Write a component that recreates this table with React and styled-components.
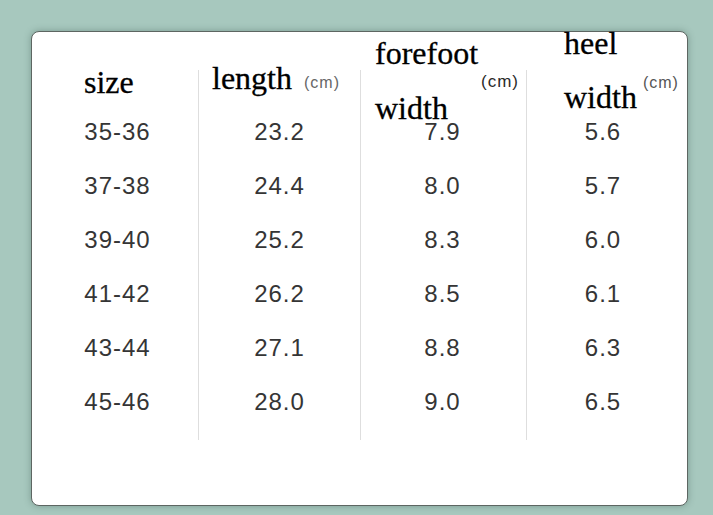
import React from "react";
import styled, { createGlobalStyle } from "styled-components";

const GlobalStyle = createGlobalStyle`
  html, body {
    margin: 0;
    padding: 0;
    background: #a7c8be;
  }
  body {
    font-family: "Liberation Sans", Arial, sans-serif;
  }
`;

const Page = styled.div`
  width: 713px;
  height: 515px;
  padding: 31px 0 0 31px;
  box-sizing: border-box;
`;

const Card = styled.div`
  width: 657px;
  height: 475px;
  box-sizing: border-box;
  background: #fff;
  border: 1px solid #5d6662;
  border-radius: 8px;
  box-shadow: 0 0 7px rgba(40, 70, 60, 0.35);
  display: grid;
  grid-template-columns: 166px 162px 166px 1fr;
  align-items: start;
`;

const Column = styled.div`
  margin-top: 38px;
  height: 370px;
  display: flex;
  flex-direction: column;
  border-left: ${(p) => (p.$first ? "none" : "1px solid #dedede")};
`;

const Head = styled.div`
  margin-top: -38px;
  height: 73px;
  flex-shrink: 0;
  display: flex;
  flex-direction: column;
  align-items: flex-start;
  padding-left: ${(p) => p.$indent}px;
  padding-top: ${(p) => p.$top}px;
  box-sizing: border-box;
`;

const Word = styled.div`
  font-family: "Liberation Serif", "Times New Roman", serif;
  font-size: 32px;
  line-height: 30px;
  color: #000;
  -webkit-text-stroke: 0.3px #000;
  white-space: nowrap;
  margin-top: ${(p) => p.$gap || 0}px;
`;

const HeadLine = styled.div`
  display: flex;
  align-items: flex-start;
  margin-top: ${(p) => p.$gap || 0}px;
`;

const Unit = styled.span`
  font-family: "Liberation Sans", Arial, sans-serif;
  font-size: ${(p) => p.$size}px;
  line-height: 16px;
  letter-spacing: 1px;
  color: ${(p) => p.$color};
  white-space: nowrap;
  margin-left: ${(p) => p.$left}px;
  margin-top: ${(p) => p.$top}px;
`;

const Cell = styled.div`
  height: 54px;
  line-height: 54px;
  font-size: 24px;
  letter-spacing: 1px;
  color: #353535;
  text-align: center;
  padding-left: ${(p) => p.$shift || 0}px;
  padding-right: ${(p) => p.$pull || 0}px;
`;

const sizes = ["35-36", "37-38", "39-40", "41-42", "43-44", "45-46"];
const lengths = ["23.2", "24.4", "25.2", "26.2", "27.1", "28.0"];
const forefoot = ["7.9", "8.0", "8.3", "8.5", "8.8", "9.0"];
const heel = ["5.6", "5.7", "6.0", "6.1", "6.3", "6.5"];

const Values = ({ list, shift, pull }) =>
  list.map((v) => (
    <Cell key={v} $shift={shift} $pull={pull}>
      {v}
    </Cell>
  ));

export default function App() {
  return (
    <>
      <GlobalStyle />
      <Page>
        <Card>
          <Column $first>
            <Head $indent={52} $top={35}>
              <Word>size</Word>
            </Head>
            <Values list={sizes} shift={5} />
          </Column>
          <Column>
            <Head $indent={13} $top={31}>
              <HeadLine>
                <Word>length</Word>
                <Unit $size={16} $color="#666" $left={12} $top={12}>
                  (cm)
                </Unit>
              </HeadLine>
            </Head>
            <Values list={lengths} />
          </Column>
          <Column>
            <Head $indent={14} $top={6}>
              <Word>forefoot</Word>
              <Unit $size={17} $color="#2a2a2a" $left={106} $top={6}>
                (cm)
              </Unit>
              <Word $gap={3}>width</Word>
            </Head>
            <Values list={forefoot} pull={2} />
          </Column>
          <Column>
            <Head $indent={37} $top={0}>
              <Word $gap={-4}>heel</Word>
              <HeadLine $gap={24}>
                <Word>width</Word>
                <Unit $size={16} $color="#555" $left={6} $top={-7}>
                  (cm)
                </Unit>
              </HeadLine>
            </Head>
            <Values list={heel} pull={8} />
          </Column>
        </Card>
      </Page>
    </>
  );
}
